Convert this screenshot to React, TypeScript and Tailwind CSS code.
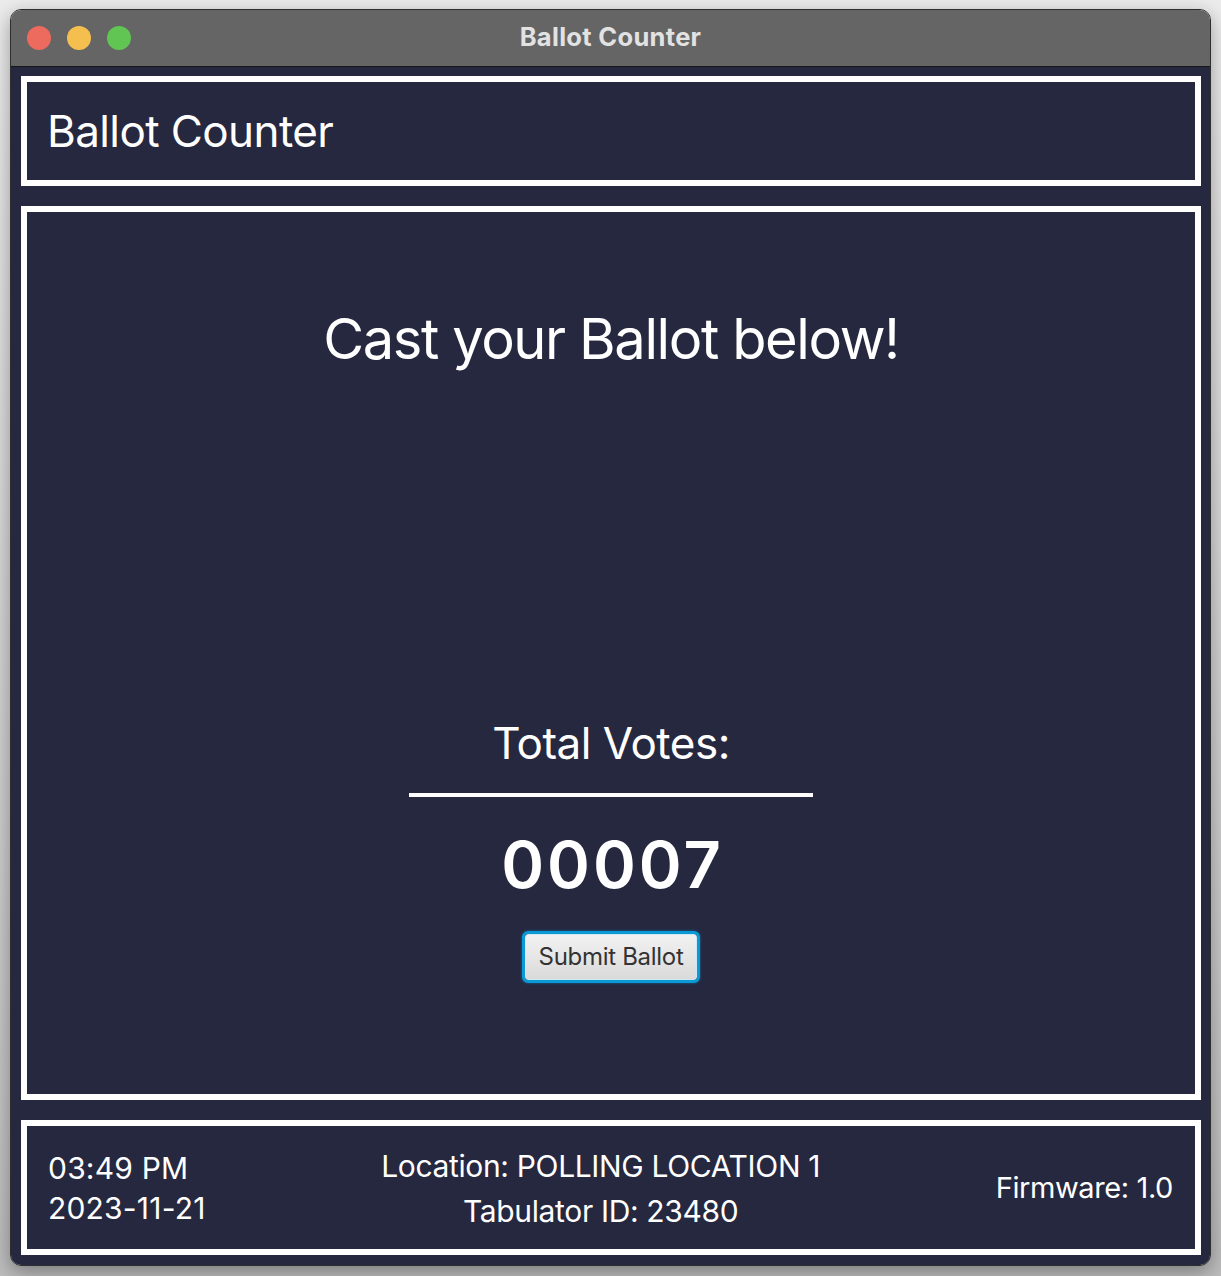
import React from "react";

export default function App() {
  const font = { fontFamily: "Inter, 'Noto Sans', sans-serif" } as React.CSSProperties;
  return (
    <div
      className="w-[1221px] h-[1276px] bg-gradient-to-b from-[#ececec] to-[#bdbdbd] pt-[9px] px-[10px] pb-[10px]"
      style={font}
    >
      <div className="h-[1257px] flex flex-col rounded-[11px] border border-[#2e2e2e] overflow-hidden shadow-[0_6px_20px_rgba(0,0,0,0.35)]">
        {/* Title bar */}
        <div className="relative h-[57px] shrink-0 bg-[#656565] border-b border-[#161616] flex items-center">
          <div className="flex items-center gap-[16px] pl-[16px]">
            <span className="w-[24px] h-[24px] rounded-full bg-[#ed6a5e]" />
            <span className="w-[24px] h-[24px] rounded-full bg-[#f5bf4f]" />
            <span className="w-[24px] h-[24px] rounded-full bg-[#61c554]" />
          </div>
          <div className="absolute inset-0 pb-[1px] flex items-center justify-center text-[25.5px] font-bold text-[#e2e2e2] tracking-[0.3px]">
            Ballot Counter
          </div>
        </div>

        {/* Content */}
        <div className="flex-1 bg-[#262840] pt-[9px] pl-[10px] pr-[9px] pb-[10px] flex flex-col gap-[20px]">
          {/* Header */}
          <div className="h-[110px] shrink-0 border-[6px] border-white flex items-center pl-[20px]">
            <span className="text-[44px] text-white leading-none tracking-[-0.6px]">Ballot Counter</span>
          </div>

          {/* Main */}
          <div className="flex-1 border-[6px] border-white flex flex-col items-center">
            <div className="mt-[99px] text-[56px] leading-none text-white tracking-[-1.4px]">
              Cast your Ballot below!
            </div>
            <div className="mt-[354px] text-[44px] leading-none text-white tracking-[-0.5px]">Total Votes:</div>
            <div className="mt-[28px] w-[404px] h-[4px] bg-white" />
            <div className="mt-[35px] text-[65px] leading-none font-semibold text-white tracking-[3px] pl-[3px]">
              00007
            </div>
            <button className="mt-[34px] w-[178px] h-[52px] rounded-[6px] border-[3px] border-[#0c9ad6] shadow-[0_0_3px_rgba(12,154,214,0.6)] p-0">
              <div className="w-full h-full rounded-[3px] border border-[#cfe9f4] bg-gradient-to-b from-[#f2f2f2] to-[#dadada] flex items-center justify-center text-[24px] text-[#333333] tracking-[-0.3px]">
                Submit Ballot
              </div>
            </button>
          </div>

          {/* Footer */}
          <div className="h-[135px] shrink-0 border-[6px] border-white flex items-center pl-[21px] pr-[22px] text-white">
            <div className="flex flex-col leading-[40px] text-[30px] tracking-[0.2px]">
              <span>03:49 PM</span>
              <span>2023-11-21</span>
            </div>
            <div className="flex-1 flex flex-col items-center leading-[45px] text-[30px] tracking-[-0.35px] pt-[2px]">
              <span>Location: POLLING LOCATION 1</span>
              <span>Tabulator ID: 23480</span>
            </div>
            <div className="text-[29px] tracking-[-0.4px]">Firmware: 1.0</div>
          </div>
        </div>
      </div>
    </div>
  );
}
